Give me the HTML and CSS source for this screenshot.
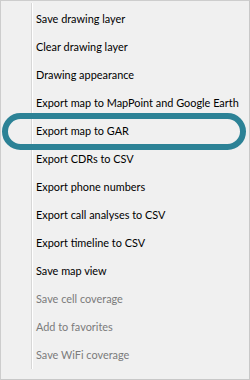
FILE: index.html
```html
<!DOCTYPE html>
<html>
<head>
    <link rel="stylesheet" href="styles.css">
</head>
<body>
    <div class="menu">
        <ul class="menu-list">
            <li class="menu-item">Save drawing layer</li>
            <li class="menu-item">Clear drawing layer</li>
            <li class="menu-item">Drawing appearance</li>
            <li class="menu-item">Export map to MapPoint and Google Earth</li>
            <li class="menu-item highlighted">Export map to GAR</li>
            <li class="menu-item">Export CDRs to CSV</li>
            <li class="menu-item">Export phone numbers</li>
            <li class="menu-item">Export call analyses to CSV</li>
            <li class="menu-item">Export timeline to CSV</li>
            <li class="menu-item">Save map view</li>
            <li class="menu-item disabled">Save cell coverage</li>
            <li class="menu-item disabled">Add to favorites</li>
            <li class="menu-item disabled">Save WiFi coverage</li>
        </ul>
    </div>
</body>
</html>
```

FILE: styles.css
```css
body {
    margin: 0;
    background-color: #f0f0f0;
    font-family: Lato, "Noto Sans", sans-serif;
}

.menu {
    box-sizing: border-box;
    width: 250px;
    height: 380px;
    background-color: #f0f0f0;
    border: 1px solid #cdcdcd;
    border-right-color: #c8c8c8;
    border-bottom-color: #c8c8c8;
    padding-top: 2px;
}

/* the gutter line on the left (grey + white) */
.menu-list {
    list-style: none;
    margin: 0 0 0 30px;
    padding: 1px 0;
    border-left: 1px solid #d7d7d7;
    box-shadow: inset 1px 0 0 #ffffff;
}

.menu-item {
    position: relative;
    height: 28px;
    line-height: 29px;
    padding-left: 4px;
    font-size: 10.9px;
    color: #000000;
    white-space: nowrap;
}

.menu-item.disabled {
    color: #7b7b7b;
}

/* teal ring drawn over the item */
.menu-item.highlighted::after {
    content: "";
    position: absolute;
    left: -30px;
    top: -3px;
    width: 244px;
    height: 37px;
    box-sizing: border-box;
    border: 6px solid #2c8296;
    border-radius: 19px;
}
```
